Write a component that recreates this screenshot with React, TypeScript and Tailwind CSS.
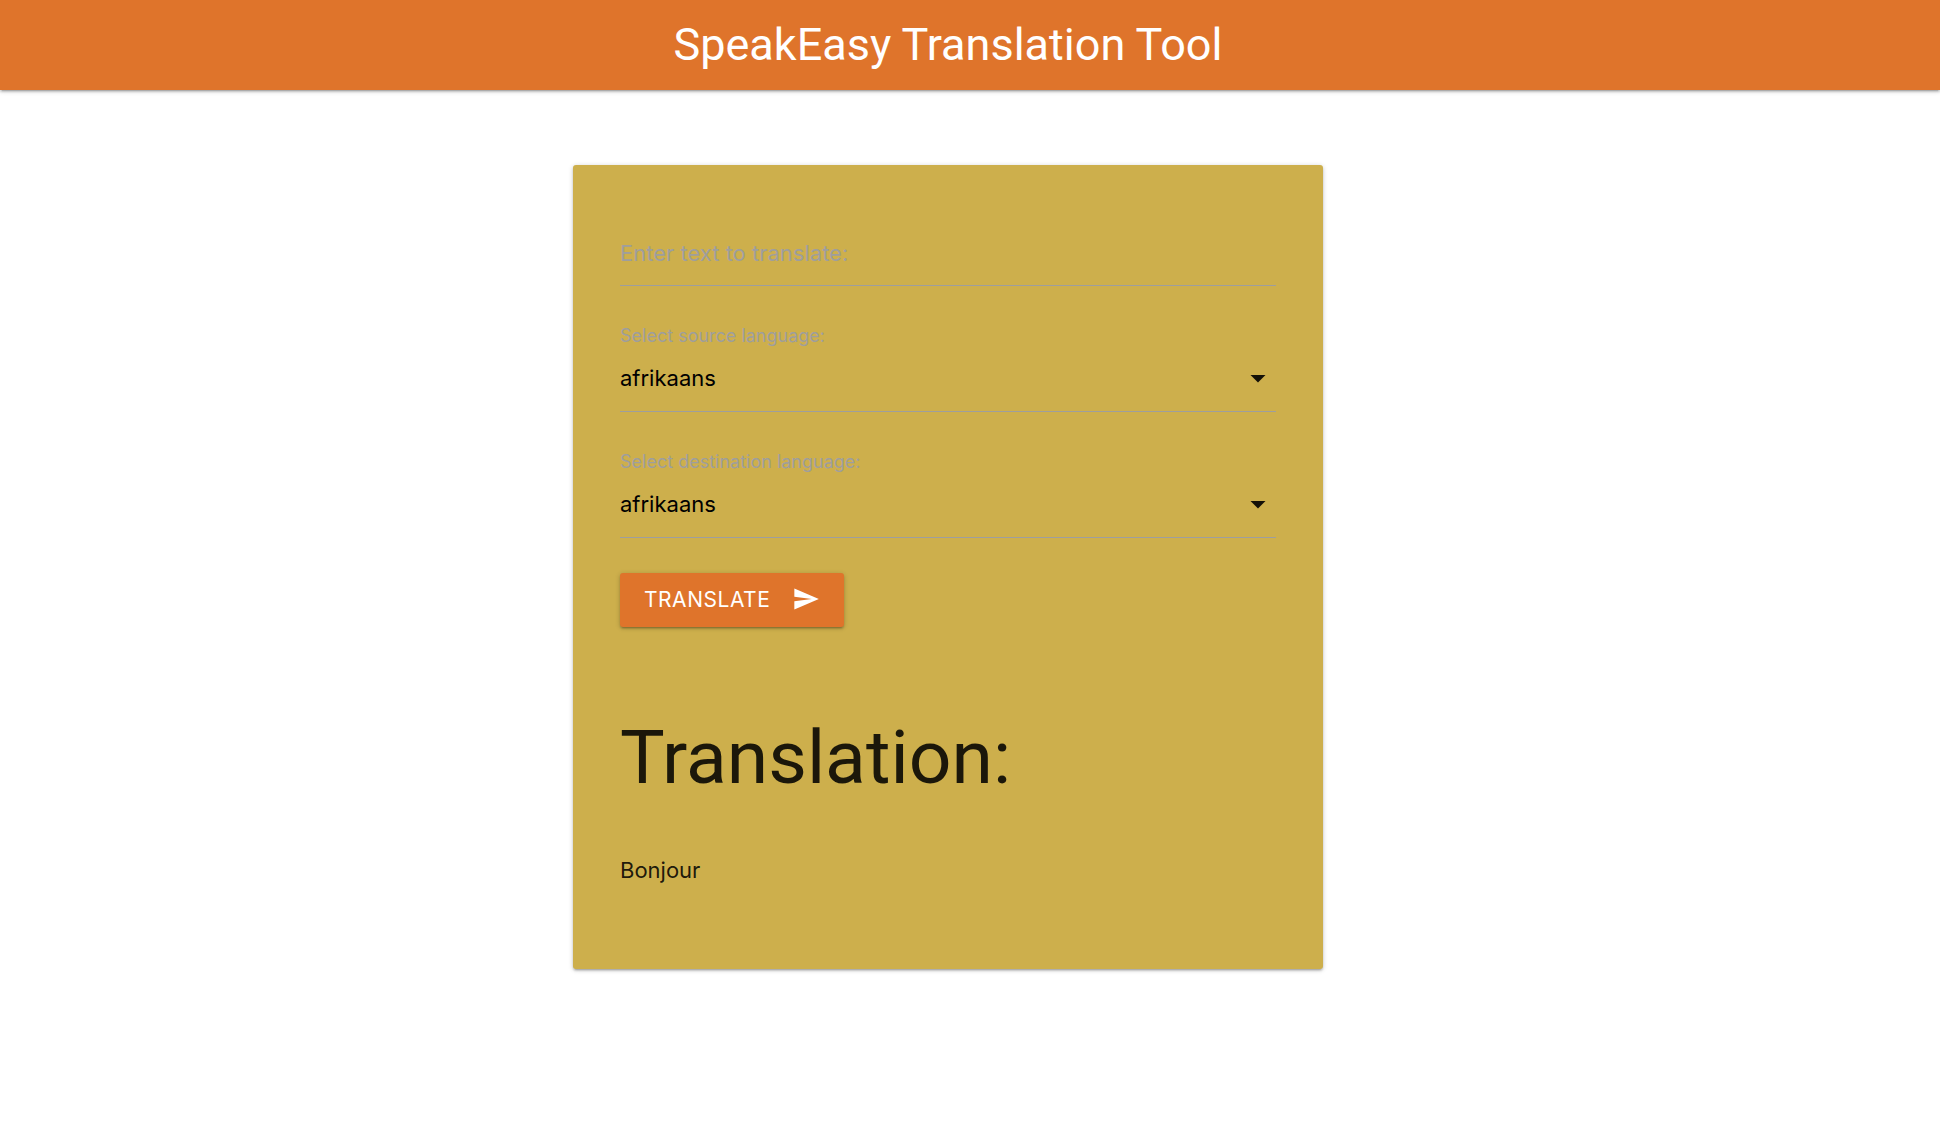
import { useState } from "react";

const LANGUAGES = ["afrikaans", "albanian", "arabic", "english", "french", "german", "spanish"];

function LanguageSelect({ id, label }: { id: string; label: string }) {
  const [value, setValue] = useState(LANGUAGES[0]);
  return (
    <div className="mt-9 flex flex-col">
      <label htmlFor={id} className="text-lg leading-7 text-[#9e9e9e]">
        {label}
      </label>
      <div className="grid items-center border-b border-[#9e9e9e]">
        <select
          id={id}
          value={value}
          onChange={(event) => setValue(event.target.value)}
          className="col-start-1 row-start-1 h-[61px] w-full appearance-none bg-transparent pb-1 text-[22px] text-black outline-none"
        >
          {LANGUAGES.map((language) => (
            <option key={language}>{language}</option>
          ))}
        </select>
        <svg
          viewBox="0 0 24 24"
          aria-hidden="true"
          className="pointer-events-none col-start-1 row-start-1 mb-1.5 size-9 justify-self-end fill-black/90"
        >
          <path d="M7 10l5 5 5-5z" />
        </svg>
      </div>
    </div>
  );
}

export default function App() {
  return (
    <div className="min-h-screen bg-white font-['Inter',sans-serif] text-black/87">
      <nav className="flex h-[90px] items-center justify-center bg-[#df742b] pb-0.5 pr-11 shadow-[0_2px_2px_0_rgba(0,0,0,0.14),0_3px_1px_-2px_rgba(0,0,0,0.12),0_1px_5px_0_rgba(0,0,0,0.2)]">
        <h1 className="font-['Roboto',sans-serif] text-[45px] leading-none text-white">SpeakEasy Translation Tool</h1>
      </nav>
      <div className="flex justify-center pr-11 pt-[75px]">
        <main className="w-full max-w-[750px] rounded-[3px] bg-[#cdaf4c] px-[47px] pb-[81px] pt-16 shadow-[0_2px_2px_0_rgba(0,0,0,0.14),0_3px_1px_-2px_rgba(0,0,0,0.12),0_1px_5px_0_rgba(0,0,0,0.2)]">
          <form onSubmit={(event) => event.preventDefault()}>
            <input
              type="text"
              aria-label="Enter text to translate:"
              placeholder="Enter text to translate:"
              className="h-[57px] w-full border-b border-[#9e9e9e] bg-transparent pb-2 text-[22px] text-black outline-none placeholder:text-[#9e9e9e]"
            />
            <LanguageSelect id="source-language" label="Select source language:" />
            <LanguageSelect id="destination-language" label="Select destination language:" />
            <button
              type="submit"
              className="mt-[35px] flex h-[54px] items-center gap-[22px] rounded-[3px] bg-[#df742b] px-6 text-[21px] tracking-wide text-white shadow-[0_2px_2px_0_rgba(0,0,0,0.14),0_3px_1px_-2px_rgba(0,0,0,0.12),0_1px_5px_0_rgba(0,0,0,0.2)]"
            >
              TRANSLATE
              <svg viewBox="0 0 24 24" aria-hidden="true" className="mb-0.5 size-7 fill-white">
                <path d="M2.01 21L23 12 2.01 3 2 10l15 2-15 2z" />
              </svg>
            </button>
          </form>
          <h2 className="mt-20 font-['Roboto',sans-serif] text-[75px] leading-[100px]">Translation:</h2>
          <p className="mt-[45px] text-[22px] leading-9">Bonjour</p>
        </main>
      </div>
    </div>
  );
}
